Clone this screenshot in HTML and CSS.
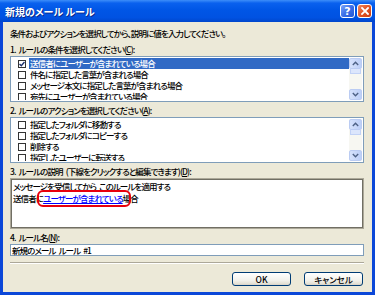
FILE: index.html
```html
<!DOCTYPE html>
<html lang="ja">
<head>
<meta charset="utf-8">
<title>新規のメール ルール</title>
<link rel="stylesheet" href="styles.css">
</head>
<body>
<div class="window">
  <div class="titlebar">
    <span class="title">新規のメール ルール</span>
    <div class="tb-buttons">
      <span class="tb-btn help">?</span>
      <span class="tb-btn close"><svg width="8" height="8" viewBox="0 0 8 8"><path d="M1 1L7 7M7 1L1 7" stroke="#fff" stroke-width="1.8" stroke-linecap="square"/></svg></span>
    </div>
  </div>
  <div class="body">
    <p class="intro">条件およびアクションを選択してから、説明に値を入力してください。</p>

    <div class="label first">1. ルールの条件を選択してください(<u>C</u>):</div>
    <div class="listbox">
      <div class="rows">
        <div class="row"><span class="cb"><svg width="6" height="6" viewBox="0 0 6 6"><path d="M0.5 3L2.3 4.8L5.5 1" fill="none" stroke="#1B2F6B" stroke-width="1.4"/></svg></span><span class="text sel">送信者にユーザーが含まれている場合</span></div>
        <div class="row"><span class="cb"></span><span class="text">件名に指定した言葉が含まれる場合</span></div>
        <div class="row"><span class="cb"></span><span class="text">メッセージ本文に指定した言葉が含まれる場合</span></div>
        <div class="row"><span class="cb"></span><span class="text">宛先にユーザーが含まれている場合</span></div>
      </div>
      <div class="scrollbar">
        <span class="sb-btn"><svg width="7" height="5" viewBox="0 0 7 5"><path d="M0.8 4L3.5 1.3L6.2 4" fill="none" stroke="#4D6185" stroke-width="1.4"/></svg></span>
        <span class="sb-thumb"></span>
        <span class="sb-track"></span>
        <span class="sb-btn"><svg width="7" height="5" viewBox="0 0 7 5"><path d="M0.8 1L3.5 3.7L6.2 1" fill="none" stroke="#4D6185" stroke-width="1.4"/></svg></span>
      </div>
    </div>

    <div class="label">2. ルールのアクションを選択してください(<u>A</u>):</div>
    <div class="listbox">
      <div class="rows">
        <div class="row"><span class="cb"></span><span class="text">指定したフォルダに移動する</span></div>
        <div class="row"><span class="cb"></span><span class="text">指定したフォルダにコピーする</span></div>
        <div class="row"><span class="cb"></span><span class="text">削除する</span></div>
        <div class="row"><span class="cb"></span><span class="text">指定したユーザーに転送する</span></div>
      </div>
      <div class="scrollbar">
        <span class="sb-btn"><svg width="7" height="5" viewBox="0 0 7 5"><path d="M0.8 4L3.5 1.3L6.2 4" fill="none" stroke="#4D6185" stroke-width="1.4"/></svg></span>
        <span class="sb-thumb"></span>
        <span class="sb-track"></span>
        <span class="sb-btn"><svg width="7" height="5" viewBox="0 0 7 5"><path d="M0.8 1L3.5 3.7L6.2 1" fill="none" stroke="#4D6185" stroke-width="1.4"/></svg></span>
      </div>
    </div>

    <div class="label">3. ルールの説明 (下線をクリックすると編集できます)(<u>D</u>):</div>
    <div class="desc">
      <div class="line">メッセージを受信してから このルールを適用する</div>
      <div class="line">送信者に<span class="link">ユーザーが含まれている</span>場合</div>
    </div>

    <div class="label">4. ルール名(<u>N</u>):</div>
    <div class="input">新規のメール ルール #1</div>

    <div class="separator"></div>

    <div class="buttons">
      <span class="btn">OK</span>
      <span class="btn">キャンセル</span>
    </div>
  </div>
</div>
</body>
</html>
```

FILE: styles.css
```css
* { box-sizing: border-box; }
html, body { margin: 0; padding: 0; }
body {
  width: 375px;
  height: 295px;
  overflow: hidden;
  font-family: "Noto Sans CJK JP", "Noto Sans", sans-serif;
  font-size: 8.5px;
  font-weight: 500;
  letter-spacing: -0.9px;
  word-spacing: 2px;
  font-feature-settings: "palt";
  color: #000;
}
.window {
  width: 375px;
  height: 295px;
  display: flex;
  flex-direction: column;
}
.titlebar {
  height: 22px;
  flex: none;
  display: flex;
  align-items: center;
  justify-content: space-between;
  padding: 0 3px 0 5px;
  background: linear-gradient(to bottom, #3D8EF9 0%, #0A61EE 14%, #0056E6 45%, #0052E2 80%, #0046CC 100%);
}
.title {
  color: #fff;
  font-weight: bold;
  font-size: 10px;
  letter-spacing: 0;
  word-spacing: 0;
  text-shadow: 1px 1px 0 #0A2A8A;
}
.tb-buttons {
  display: flex;
  gap: 2px;
}
.tb-btn {
  width: 15px;
  height: 14px;
  border: 1px solid #fff;
  border-radius: 3px;
  display: flex;
  align-items: center;
  justify-content: center;
  color: #fff;
  font-weight: bold;
  font-family: "DejaVu Sans", sans-serif;
  font-size: 11px;
  letter-spacing: 0;
  line-height: 1;
}
.help {
  background: linear-gradient(135deg, #7AA5FA 0%, #3B6FE8 50%, #2358D6 100%);
}
.close {
  background: linear-gradient(135deg, #EE8A62 0%, #E25424 50%, #C93E12 100%);
}
.body {
  flex: 1;
  background: #ECE9D8;
  border: 3px solid #0B47D8;
  border-top: none;
  padding: 6px 8px 0 7px;
  display: flex;
  flex-direction: column;
}
.intro {
  margin: 0 0 6px 0;
  line-height: 10px;
  white-space: nowrap;
}
.label {
  line-height: 10px;
  height: 10px;
  margin: 3px 0 2px 0;
  white-space: nowrap;
}
.label.first { margin-top: 0; }
.listbox {
  height: 46px;
  border: 1px solid #7F9DB9;
  padding: 1px;
  background: #fff;
  display: flex;
  flex: none;
}
.rows {
  flex: 1;
  overflow: hidden;
  padding-left: 6px;
}
.row {
  height: 11px;
  display: flex;
  align-items: center;
  overflow: hidden;
}
.cb {
  width: 8px;
  height: 8px;
  border: 1px solid #333;
  background: #fff;
  margin-right: 3px;
  flex: none;
  display: flex;
  align-items: center;
  justify-content: center;
}
.text {
  flex: 1;
  line-height: 11px;
  height: 11px;
  padding-left: 1px;
  white-space: nowrap;
  overflow: hidden;
}
.text.sel {
  background: #316AC5;
  color: #fff;
}
.scrollbar {
  width: 13px;
  display: flex;
  flex-direction: column;
  background: #F7F7F2;
  flex: none;
}
.sb-btn {
  height: 11px;
  flex: none;
  border: 1px solid #BBCCF3;
  border-radius: 2px;
  background: linear-gradient(to right, #D6E2FC, #BCCFF8);
  display: flex;
  align-items: center;
  justify-content: center;
}
.sb-thumb {
  height: 5px;
  flex: none;
  margin: 0 1px;
  border: 1px solid #C2D2F6;
  border-top: none;
  background: #DCE6FC;
}
.sb-track { flex: 1; }
.desc {
  height: 51px;
  flex: none;
  background: #fff;
  border: 1px solid #ACA899;
  box-shadow: inset 1px 1px 0 #716F64, inset -1px -1px 0 #716F64;
  padding: 1px 2px 0 2px;
  white-space: nowrap;
}
.line {
  line-height: 12px;
  height: 12px;
}
.link {
  position: relative;
  color: #0000FF;
  text-decoration: underline;
}
.link::after {
  content: "";
  position: absolute;
  left: -6px;
  right: -8px;
  top: -2px;
  bottom: -3px;
  border: 2px solid #E8000B;
  border-radius: 6px;
}
.input {
  height: 12px;
  flex: none;
  background: #fff;
  border: 1px solid #7F9DB9;
  padding-left: 1px;
  line-height: 10px;
  white-space: nowrap;
}
.separator {
  margin-top: 6px;
  height: 2px;
  border-top: 1px solid #ACA899;
  border-bottom: 1px solid #fff;
}
.buttons {
  margin-top: 8px;
  display: flex;
  justify-content: flex-end;
  gap: 13px;
  padding-right: 1px;
}
.btn {
  width: 59px;
  height: 14px;
  border: 1px solid #003C74;
  border-radius: 3px;
  background: linear-gradient(to bottom, #FFFFFF 0%, #F3F2EC 60%, #E3E0D4 90%, #D6D0C5 100%);
  display: flex;
  align-items: center;
  justify-content: center;
  line-height: 1;
  letter-spacing: 0;
}
```
